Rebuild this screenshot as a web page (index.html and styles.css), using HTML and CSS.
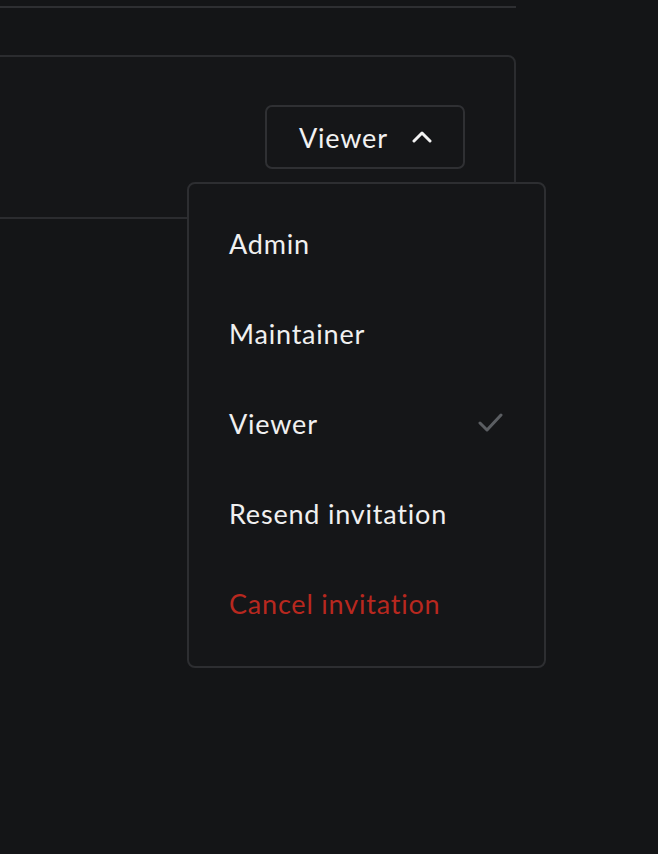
FILE: index.html
```html
<!DOCTYPE html>
<html lang="en">
<head>
<meta charset="utf-8">
<title>Member role</title>
<link rel="stylesheet" href="styles.css">
</head>
<body>
  <div class="divider"></div>
  <div class="card">
    <div class="role-wrap">
      <button class="role-btn" type="button">
        <span>Viewer</span>
        <svg class="chev" width="20" height="13" viewBox="0 0 20 13" aria-hidden="true">
          <path d="M2 11 L10 3 L18 11" fill="none" stroke="#f2f2f2" stroke-width="3" stroke-linecap="round" stroke-linejoin="round"/>
        </svg>
      </button>
      <ul class="menu">
        <li class="item">Admin</li>
        <li class="item">Maintainer</li>
        <li class="item">Viewer
          <svg class="check" width="26" height="20" viewBox="0 0 26 20" aria-hidden="true">
            <path d="M2 10 L9 17 L23 2" fill="none" stroke="#5b5e62" stroke-width="3" stroke-linecap="round" stroke-linejoin="round"/>
          </svg>
        </li>
        <li class="item">Resend invitation</li>
        <li class="item danger">Cancel invitation</li>
      </ul>
    </div>
  </div>
</body>
</html>
```

FILE: styles.css
```css
html, body {
  margin: 0;
  padding: 0;
  background: #141517;
  height: 100%;
}

body {
  font-family: Lato, "Noto Sans", "Liberation Sans", sans-serif;
  color: #f0f0f0;
  overflow: hidden;
}

.divider {
  width: 516px;
  height: 2px;
  margin-top: 6px;
  background: #2e2f32;
}

.card {
  box-sizing: border-box;
  width: 526px;
  height: 164px;
  margin-top: 47px;
  margin-left: -10px;
  border: 2px solid #2b2c2f;
  border-radius: 8px;
  background: #151618;
  display: flex;
  justify-content: flex-end;
  align-items: flex-start;
  padding: 48px 49px 0 0;
}

.role-wrap {
  position: relative;
}

.role-btn {
  box-sizing: border-box;
  width: 200px;
  height: 64px;
  border: 2px solid #2f3033;
  border-radius: 7px;
  background: #151618;
  color: #f2f2f2;
  font-family: inherit;
  font-size: 27px;
  letter-spacing: 0.8px;
  display: flex;
  align-items: center;
  justify-content: space-between;
  padding: 0 31px 0 32px;
  cursor: pointer;
}

.chev {
  display: block;
  margin-top: -2px;
}

.menu {
  position: absolute;
  top: calc(100% + 13px);
  right: -81px;
  box-sizing: border-box;
  width: 359px;
  margin: 0;
  padding: 14px 0 18px;
  list-style: none;
  border: 2px solid #2d2e31;
  border-radius: 8px;
  background: #151618;
}

.item {
  height: 90px;
  display: flex;
  align-items: center;
  justify-content: space-between;
  padding: 0 40px 0 40px;
  font-size: 27px;
  letter-spacing: 0.8px;
  color: #f0f0f0;
}

.item.danger {
  color: #b8281f;
}

.check {
  display: block;
}
```
